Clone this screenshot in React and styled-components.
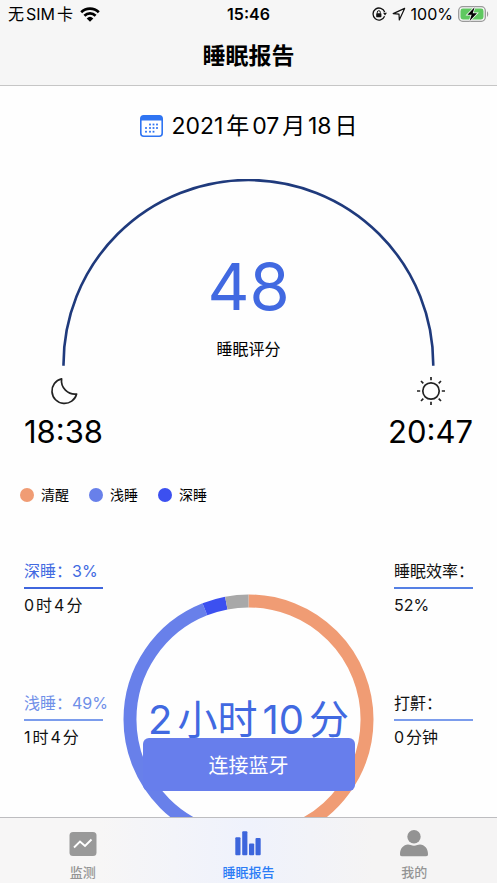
import React from 'react'
import styled, { createGlobalStyle } from 'styled-components'

const legend = [
  { name: '清醒', color: '#f09c74' },
  { name: '浅睡', color: '#6880ea' },
  { name: '深睡', color: '#3c50f0' },
]

// share of the night, clockwise from the top
const segments = [
  { color: '#f09c74', from: 0, size: 45 },
  { color: '#6880ea', from: 45, size: 49 },
  { color: '#3c50f0', from: 94, size: 3 },
  { color: '#a8a8a8', from: 97, size: 3 },
]

function StatusBar() {
  return (
    <Status>
      <StatusSide>
        <span>无SIM卡</span>
        <svg width='20' height='15' viewBox='0 0 20 15' fill='none' stroke='#000' strokeWidth='2.7'>
          <path d='M1.2 5.2a12.6 12.6 0 0 1 17.6 0' />
          <path d='M4.4 8.7a8 8 0 0 1 11.2 0' />
          <path d='M6.7 11.4a4.8 4.8 0 0 1 6.6 0L10 14.8z' fill='#000' stroke='none' />
        </svg>
      </StatusSide>
      <Clock>15:46</Clock>
      <StatusSide $end>
        <svg width='15' height='14' viewBox='0 0 15 14' fill='none' stroke='#111' strokeWidth='1.3'>
          <path d='M12.7 5A6 6 0 1 0 12.6 9.3' />
          <path d='M11 5.8h4l-2 2.8z' fill='#111' stroke='none' />
          <rect x='4.2' y='6.2' width='5.2' height='4' rx='0.6' fill='#111' stroke='none' />
          <path d='M5.3 6.500V5.200a1.500 1.500 0 0 1 3 0v1.300' strokeWidth='1' />
        </svg>
        <svg width='14' height='14' viewBox='0 0 14 14' fill='none' stroke='#111' strokeWidth='1.2' strokeLinejoin='round'>
          <path d='M12.600 1.400L1.200 6.600l5.800.5.3 5.800z' />
        </svg>
        <span>100%</span>
        <svg width='31' height='16' viewBox='0 0 31 16'>
          <rect x='0.7' y='0.7' width='26.6' height='14.6' rx='4' fill='none' stroke='#9a9a9a' strokeWidth='1.3' />
          <rect x='2.5' y='2.5' width='23' height='11' rx='2.4' fill='#5fc860' />
          <path d='M29 5.2c1.6.6 1.6 5 0 5.6z' fill='#9a9a9a' />
          <path d='M16.6 1.2L9.4 8.7h4.2l-2 6.3 7.400-7.800h-4.300z' fill='#000' stroke='#f6f6f6' strokeWidth='1.6' paintOrder='stroke' />
        </svg>
      </StatusSide>
    </Status>
  )
}

function CalendarIcon() {
  const dots = [
    [10, 9.5], [13.5, 9.5], [17, 9.5],
    [6, 13], [10, 13], [13.5, 13], [17, 13],
    [6, 16.7], [10, 16.7], [13.5, 16.7],
  ]
  return (
    <svg width='23' height='22' viewBox='0 0 23 22'>
      <rect x='0.8' y='0.8' width='21.4' height='20.4' rx='3' fill='#fff' stroke='#2f74f2' strokeWidth='1.6' />
      <path d='M0.8 5.600V3.800a3 3 0 0 1 3-3h15.400a3 3 0 0 1 3 3v1.800z' fill='#2f74f2' />
      {dots.map(([x, y]) => (
        <rect key={x + '-' + y} x={x - 0.9} y={y - 0.9} width='1.8' height='1.8' fill='#2f74f2' />
      ))}
    </svg>
  )
}

function MoonIcon() {
  return (
    <svg width='28' height='28' viewBox='0 0 28 28' fill='none' stroke='#222' strokeWidth='1.7' strokeLinejoin='round'>
      <path d='M11.600 1.800A12.500 12.500 0 1 0 26.600 17C18 18 10.400 10.600 11.600 1.800z' />
    </svg>
  )
}

function SunIcon() {
  return (
    <svg width='28' height='28' viewBox='0 0 28 28' fill='none' stroke='#222' strokeWidth='1.7'>
      <circle cx='14' cy='14' r='8.2' />
      <path d='M14 0v3.200M14 24.800V28M0 14h3.200M24.800 14H28M4 4l2.300 2.300M21.700 21.700L24 24M24 4l-2.300 2.300M6.300 21.700L4 24' />
    </svg>
  )
}

function Stat({ label, value, color, line }) {
  return (
    <StatBox>
      <StatLabel $color={color} $line={line}>{label}</StatLabel>
      <StatValue>{value}</StatValue>
    </StatBox>
  )
}

function App() {
  return (
    <Page>
      <GlobalStyle />
      <Header>
        <StatusBar />
        <Title>睡眠报告</Title>
      </Header>

      <Main>
        <DateButton type='button'>
          <CalendarIcon />
          2021年07月18日
        </DateButton>

        <Gauge>
          <svg viewBox='0 0 374 188' fill='none'>
            <path d='M1.500 187.500V186a185.500 185 0 0 1 371 0v1.500' stroke='#1f3a7c' strokeWidth='2.6' />
          </svg>
          <Score>
            <ScoreNumber>48</ScoreNumber>
            <ScoreText>睡眠评分</ScoreText>
          </Score>
        </Gauge>

        <Times>
          <Time>
            <MoonIcon />
            <span>18:38</span>
          </Time>
          <Time>
            <SunIcon />
            <span>20:47</span>
          </Time>
        </Times>

        <Legend>
          {legend.map((item) => (
            <LegendItem key={item.name} $color={item.color}>{item.name}</LegendItem>
          ))}
        </Legend>

        <Summary>
          <Stats>
            <Stat label='深睡：3%' value='0时4分' color='#4169e1' line='#3f66dd' />
            <Stat label='浅睡：49%' value='1时4分' color='#6f8fe8' line='#7b9cec' />
          </Stats>
          <Ring>
            <svg viewBox='0 0 252 252' fill='none'>
              <g transform='rotate(-90 126 126)'>
                {segments.map((s) => (
                  <circle
                    key={s.from}
                    cx='126'
                    cy='126'
                    r='119'
                    pathLength='100'
                    stroke={s.color}
                    strokeWidth='13'
                    strokeDasharray={`${s.size} ${100 - s.size}`}
                    strokeDashoffset={-s.from}
                  />
                ))}
              </g>
            </svg>
            <Total>2小时10分</Total>
          </Ring>
          <Stats>
            <Stat label='睡眠效率：' value='52%' color='#111' line='#5580e4' />
            <Stat label='打鼾：' value='0分钟' color='#111' line='#7b9cec' />
          </Stats>
        </Summary>

        <Connect type='button'>连接蓝牙</Connect>
      </Main>

      <TabBar>
        <Tab href='#monitor'>
          <svg width='28' height='28' viewBox='0 0 28 28'>
            <rect x='0.5' y='2' width='27' height='24' rx='3.5' fill='#999' />
            <path d='M5 17.500l6-6 5 4.500 6.500-6.500' fill='none' stroke='#fff' strokeWidth='1.9' />
          </svg>
          监测
        </Tab>
        <Tab href='#report' $active>
          <svg width='28' height='28' viewBox='0 0 28 28' fill='#3d66dc'>
            <rect x='1.3' y='7.3' width='5.2' height='18' rx='1' />
            <rect x='8.2' y='1.3' width='5.2' height='24' rx='1' />
            <rect x='15' y='13.5' width='5.2' height='11.8' rx='1' />
            <rect x='21.5' y='8' width='5.2' height='17.3' rx='1' />
          </svg>
          睡眠报告
        </Tab>
        <Tab href='#mine'>
          <svg width='28' height='28' viewBox='0 0 28 28' fill='#939393'>
            <circle cx='14' cy='6.7' r='6.7' />
            <path d='M2 26.3c-1.6 0-2-1-2-2.3C0 18.5 3.500 15 8 14.600c2 0 3.500 1.200 6 1.200s4-1.200 6-1.200c4.500.4 8 3.900 8 9.400 0 1.300-.4 2.300-2 2.300z' />
          </svg>
          我的
        </Tab>
      </TabBar>
    </Page>
  )
}

export default App

const GlobalStyle = createGlobalStyle`
* {
    box-sizing: border-box;
}

body {
    margin: 0;
    background: #fefefe;
    color: #000;
    font-family: Inter, "Noto Sans CJK SC", sans-serif;
    text-autospace: normal;
}

button {
    font-family: inherit;
    color: inherit;
    border: none;
    background: none;
    padding: 0;
    cursor: pointer;
    text-autospace: inherit;
}

svg {
    display: block;
    flex-shrink: 0;
}
`

const Page = styled.div`
height: 100vh;
display: flex;
flex-direction: column;
`

const Header = styled.header`
background: #f6f6f6;
border-bottom: 1px solid #c6c6c6;
`

const Status = styled.div`
height: 28px;
padding: 0 8px;
display: grid;
grid-template-columns: 1fr auto 1fr;
align-items: center;
font-size: 16px;
line-height: 20px;
`

const StatusSide = styled.div`
display: flex;
align-items: center;
justify-content: ${(p) => (p.$end ? 'flex-end' : 'flex-start')};
gap: ${(p) => (p.$end ? '5px' : '7px')};
`

const Clock = styled.div`
font-weight: 600;
`

const Title = styled.h1`
margin: 0;
height: 57px;
font-size: 23px;
line-height: 56px;
font-weight: 600;
text-align: center;
`

const Main = styled.main`
flex: 1;
min-height: 0;
position: relative;
overflow: hidden;
`

const DateButton = styled.button`
display: flex;
align-items: center;
gap: 9px;
margin: 24px auto 0;
font-size: 23px;
line-height: 32px;
`

const Gauge = styled.section`
width: 75%;
margin: 37px auto 0;
display: grid;

svg {
    width: 100%;
    grid-area: 1 / 1;
}
`

const Score = styled.div`
grid-area: 1 / 1;
align-self: end;
display: flex;
flex-direction: column;
align-items: center;
padding-bottom: 5px;
`

const ScoreNumber = styled.div`
font-size: 65px;
line-height: 80px;
color: #4169e1;
`

const ScoreText = styled.div`
font-size: 16px;
line-height: 24px;
margin-top: 10px;
`

const Times = styled.div`
display: flex;
justify-content: space-between;
padding: 0 24px;
margin-top: 11px;
`

const Time = styled.div`
display: flex;
flex-direction: column;
align-items: center;
gap: 7px;
font-size: 31px;
line-height: 40px;
`

const Legend = styled.div`
display: flex;
gap: 20px;
padding: 0 20px;
margin-top: 31px;
`

const LegendItem = styled.div`
display: flex;
align-items: center;
gap: 7px;
font-size: 14px;
line-height: 24px;

&::before {
    content: '';
    width: 14px;
    height: 14px;
    border-radius: 50%;
    background: ${(p) => p.$color};
}
`

const Summary = styled.section`
display: grid;
grid-template-columns: 79px 1fr 79px;
gap: 20px;
padding: 0 24px;
margin-top: 52px;
`

const Stats = styled.div`
display: flex;
flex-direction: column;
gap: 74px;
`

const StatBox = styled.div`
font-size: 16px;
line-height: 24px;
white-space: nowrap;
`

const StatLabel = styled.div`
height: 30px;
color: ${(p) => p.$color};
border-bottom: 2px solid ${(p) => p.$line};
`

const StatValue = styled.div`
color: #111;
padding-top: 4px;
`

const Ring = styled.div`
display: grid;
align-items: center;
margin-top: 35px;

svg {
    width: 100%;
    grid-area: 1 / 1;
}
`

const Total = styled.div`
grid-area: 1 / 1;
text-align: center;
font-size: 40px;
line-height: 56px;
color: #4169e1;
white-space: nowrap;
`

const Connect = styled.button`
position: absolute;
left: 0;
right: 0;
bottom: 26px;
margin: 0 auto;
width: 212px;
height: 53px;
border-radius: 6px;
background: #677eec;
color: #fff;
font-size: 20px;
`

const TabBar = styled.nav`
height: 66px;
display: grid;
grid-template-columns: repeat(3, 1fr);
border-top: 1px solid #bdbdc0;
background: linear-gradient(90deg, #f7f6f6 20%, #eff2fc 50%, #f5f4f4 75%);
`

const Tab = styled.a`
display: flex;
flex-direction: column;
align-items: center;
gap: 4px;
padding-top: 12px;
font-size: 13px;
line-height: 20px;
font-weight: 500;
text-decoration: none;
color: ${(p) => (p.$active ? '#2b7cf6' : '#949494')};
`
